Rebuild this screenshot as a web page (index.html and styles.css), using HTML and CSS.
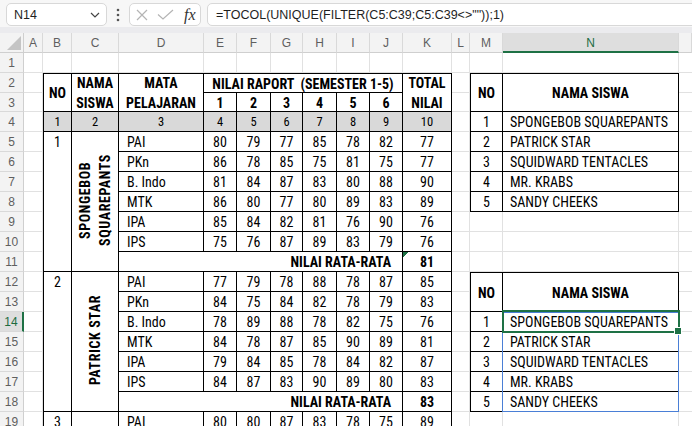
FILE: index.html
```html
<!DOCTYPE html>
<html>
<head>
<meta charset="utf-8">
<link rel="stylesheet" href="styles.css">
</head>
<body>
<div class="app">
  <div class="fbar">
    <div class="namebox">
      <span>N14</span>
      <svg class="chev" width="10" height="6" viewBox="0 0 10 6"><polyline points="1,1 5,5 9,1" fill="none" stroke="#444" stroke-width="1.2"/></svg>
    </div>
    <div class="dots">
      <svg width="4" height="14" viewBox="0 0 4 14"><circle cx="2" cy="2" r="1.3" fill="#555"/><circle cx="2" cy="7" r="1.3" fill="#555"/><circle cx="2" cy="12" r="1.3" fill="#555"/></svg>
    </div>
    <div class="fnbox">
      <svg width="12" height="12" viewBox="0 0 12 12"><path d="M1 1L11 11M11 1L1 11" stroke="#b4b4b4" stroke-width="1.2" fill="none"/></svg>
      <svg width="17" height="11" viewBox="0 0 17 11"><polyline points="1,5.5 6,10 16,1" fill="none" stroke="#b4b4b4" stroke-width="1.2"/></svg>
      <span class="fx">fx</span>
    </div>
    <div class="formula">=TOCOL(UNIQUE(FILTER(C5:C39;C5:C39&lt;&gt;""));1)</div>
  </div>
  <div class="band"></div>
  <div class="sheet">
    <div class="corner">
      <svg width="14" height="14" viewBox="0 0 14 14"><polygon points="14,0 14,14 0,14" fill="#c4c4c4"/></svg>
    </div>
    <div class="colhdr">
      <div class="ch">A</div><div class="ch">B</div><div class="ch">C</div><div class="ch">D</div>
      <div class="ch">E</div><div class="ch">F</div><div class="ch">G</div><div class="ch">H</div>
      <div class="ch">I</div><div class="ch">J</div><div class="ch">K</div><div class="ch">L</div>
      <div class="ch">M</div><div class="ch on">N</div><div class="ch"></div>
    </div>
    <div class="rowhdr">
      <div class="rh">1</div><div class="rh">2</div><div class="rh">3</div><div class="rh">4</div>
      <div class="rh">5</div><div class="rh">6</div><div class="rh">7</div><div class="rh">8</div>
      <div class="rh">9</div><div class="rh">10</div><div class="rh">11</div><div class="rh">12</div>
      <div class="rh">13</div><div class="rh on">14</div><div class="rh">15</div><div class="rh">16</div>
      <div class="rh">17</div><div class="rh">18</div><div class="rh">19</div>
    </div>
    <div class="cells">
      <div class="tbl main">
        <div class="c b rs2">NO</div>
        <div class="c b rs2">NAMA<br>SISWA</div>
        <div class="c b rs2">MATA<br>PELAJARAN</div>
        <div class="c b cs6 pre">NILAI RAPORT  (SEMESTER 1-5)</div>
        <div class="c b rs2">TOTAL<br>NILAI</div>
        <div class="c b">1</div><div class="c b">2</div><div class="c b">3</div><div class="c b">4</div><div class="c b">5</div><div class="c b">6</div>

        <div class="c g">1</div><div class="c g">2</div><div class="c g">3</div><div class="c g">4</div><div class="c g">5</div>
        <div class="c g">6</div><div class="c g">7</div><div class="c g">8</div><div class="c g">9</div><div class="c g">10</div>

        <div class="c rs7 top">1</div>
        <div class="c rs7 vcell"><span class="rot">SPONGEBOB<br>SQUAREPANTS</span></div>
        <div class="c l">PAI</div><div class="c">80</div><div class="c">79</div><div class="c">77</div><div class="c">85</div><div class="c">78</div><div class="c">82</div><div class="c">77</div>
        <div class="c l">PKn</div><div class="c">86</div><div class="c">78</div><div class="c">85</div><div class="c">75</div><div class="c">81</div><div class="c">75</div><div class="c">77</div>
        <div class="c l">B. Indo</div><div class="c">81</div><div class="c">84</div><div class="c">87</div><div class="c">83</div><div class="c">80</div><div class="c">88</div><div class="c">90</div>
        <div class="c l">MTK</div><div class="c">86</div><div class="c">80</div><div class="c">77</div><div class="c">80</div><div class="c">89</div><div class="c">83</div><div class="c">89</div>
        <div class="c l">IPA</div><div class="c">85</div><div class="c">84</div><div class="c">82</div><div class="c">81</div><div class="c">76</div><div class="c">90</div><div class="c">76</div>
        <div class="c l">IPS</div><div class="c">75</div><div class="c">76</div><div class="c">87</div><div class="c">89</div><div class="c">83</div><div class="c">79</div><div class="c">76</div>
        <div class="c b r cs7">NILAI RATA-RATA</div><div class="c b tri">81</div>

        <div class="c rs7 top">2</div>
        <div class="c rs7 vcell"><span class="rot">PATRICK STAR</span></div>
        <div class="c l">PAI</div><div class="c">77</div><div class="c">79</div><div class="c">78</div><div class="c">88</div><div class="c">78</div><div class="c">87</div><div class="c">85</div>
        <div class="c l">PKn</div><div class="c">84</div><div class="c">75</div><div class="c">84</div><div class="c">82</div><div class="c">78</div><div class="c">79</div><div class="c">83</div>
        <div class="c l">B. Indo</div><div class="c">78</div><div class="c">89</div><div class="c">88</div><div class="c">78</div><div class="c">82</div><div class="c">75</div><div class="c">76</div>
        <div class="c l">MTK</div><div class="c">84</div><div class="c">78</div><div class="c">87</div><div class="c">85</div><div class="c">90</div><div class="c">89</div><div class="c">81</div>
        <div class="c l">IPA</div><div class="c">79</div><div class="c">84</div><div class="c">85</div><div class="c">78</div><div class="c">84</div><div class="c">82</div><div class="c">87</div>
        <div class="c l">IPS</div><div class="c">84</div><div class="c">87</div><div class="c">83</div><div class="c">90</div><div class="c">89</div><div class="c">80</div><div class="c">83</div>
        <div class="c b r cs7">NILAI RATA-RATA</div><div class="c b">83</div>

        <div class="c top">3</div>
        <div class="c"></div>
        <div class="c l">PAI</div><div class="c">80</div><div class="c">80</div><div class="c">87</div><div class="c">83</div><div class="c">78</div><div class="c">75</div><div class="c">89</div>
      </div>

      <div class="tbl side s1">
        <div class="c b rs2">NO</div><div class="c b rs2">NAMA SISWA</div>
        <div class="c">1</div><div class="c n">SPONGEBOB SQUAREPANTS</div>
        <div class="c">2</div><div class="c n">PATRICK STAR</div>
        <div class="c">3</div><div class="c n">SQUIDWARD TENTACLES</div>
        <div class="c">4</div><div class="c n">MR. KRABS</div>
        <div class="c">5</div><div class="c n">SANDY CHEEKS</div>
      </div>

      <div class="tbl side s2">
        <div class="c b rs2">NO</div><div class="c b rs2">NAMA SISWA</div>
        <div class="c">1</div><div class="c n">SPONGEBOB SQUAREPANTS</div>
        <div class="c">2</div><div class="c n">PATRICK STAR</div>
        <div class="c">3</div><div class="c n">SQUIDWARD TENTACLES</div>
        <div class="c">4</div><div class="c n">MR. KRABS</div>
        <div class="c">5</div><div class="c n">SANDY CHEEKS</div>
      </div>

      <div class="spill"></div>
      <div class="sel"></div>
    </div>
  </div>
</div>
</body>
</html>
```

FILE: styles.css
```css
:root {
  --cols: 19px 29px 47px 85px 33px 34px 32px 34px 33px 33px 49px 18px 33px 176px 1fr;
  --rows: 20px 20px 19px 20px repeat(15, 20px);
  --grid: #e1e1e1;
  --hdr: #f3f3f3;
  --hdrline: #d9d9d9;
  --green: #1e7145;
}

* { box-sizing: border-box; }

html, body {
  margin: 0;
  height: 100%;
  overflow: hidden;
  background: #fff;
}

body {
  font-family: "Liberation Sans Narrow", "Arial Narrow", "Roboto Condensed", "DejaVu Sans Condensed", sans-serif;
  font-size: 14px;
  color: #000;
}

.app {
  width: 692px;
  height: 426px;
  display: flex;
  flex-direction: column;
  overflow: hidden;
}

/* formula bar */
.fbar {
  height: 27px;
  flex: none;
  background: #f7f7f7;
  display: flex;
  align-items: flex-start;
  padding: 3px 0 0 6px;
  overflow: hidden;
  font-family: "Liberation Sans", Arial, sans-serif;
  font-size: 12.5px;
  color: #1f1f1f;
}

.namebox {
  flex: none;
  width: 101px;
  height: 23px;
  background: #fff;
  border: 1px solid #d8d8d8;
  border-radius: 5px;
  display: flex;
  align-items: center;
  justify-content: space-between;
  padding: 0 6px 0 7px;
}

.dots {
  flex: none;
  width: 22px;
  height: 23px;
  display: flex;
  align-items: center;
  justify-content: center;
}

.fnbox {
  flex: none;
  width: 72px;
  height: 23px;
  background: #fff;
  border: 1px solid #d8d8d8;
  border-radius: 5px;
  display: flex;
  align-items: center;
  gap: 9px;
  padding-left: 6px;
}

.fx {
  font-family: "Liberation Serif", "DejaVu Serif", serif;
  font-style: italic;
  font-size: 16px;
  color: #333;
  margin-left: 1px;
}

.formula {
  flex: none;
  width: 520px;
  height: 23px;
  margin-left: 6px;
  background: #fff;
  border: 1px solid #d8d8d8;
  border-radius: 5px;
  display: flex;
  align-items: center;
  padding-left: 8px;
  white-space: nowrap;
}

.band {
  height: 6px;
  flex: none;
  background: #ebebee;
}

/* sheet */
.sheet {
  flex: 1;
  display: grid;
  grid-template-columns: 24px 1fr;
  grid-template-rows: 20px 1fr;
  min-height: 0;
  overflow: hidden;
}

.corner {
  background: var(--hdr);
  border-right: 1px solid #cfcfcf;
  border-bottom: 1px solid #cfcfcf;
  display: flex;
  align-items: flex-end;
  justify-content: flex-end;
  padding: 0 2px 2px 0;
}

.colhdr {
  display: grid;
  grid-template-columns: var(--cols);
  background: var(--hdr);
  font-family: "Liberation Sans", Arial, sans-serif;
  font-size: 12px;
  color: #5f5f5f;
}

.ch {
  display: flex;
  align-items: center;
  justify-content: center;
  border-right: 1px solid var(--hdrline);
  border-bottom: 1px solid #cfcfcf;
  padding-top: 1px;
}

.ch.on {
  background: #dedede;
  color: #1c6b3f;
  border-bottom: 2px solid var(--green);
}

.rowhdr {
  display: grid;
  grid-template-rows: var(--rows);
  align-content: start;
  background: var(--hdr);
  font-family: "Liberation Sans", Arial, sans-serif;
  font-size: 12px;
  color: #5f5f5f;
}

.rh {
  display: flex;
  align-items: center;
  justify-content: center;
  border-bottom: 1px solid var(--hdrline);
  border-right: 1px solid #cfcfcf;
  padding-top: 1px;
}

.rh.on {
  background: #dedede;
  color: #1c6b3f;
  border-right: 2px solid var(--green);
}

.cells {
  display: grid;
  grid-template-columns: var(--cols);
  grid-template-rows: var(--rows);
  align-content: start;
  background:
    linear-gradient(var(--grid), var(--grid)) 18px 0 / 1px 100% no-repeat,
    linear-gradient(var(--grid), var(--grid)) 47px 0 / 1px 100% no-repeat,
    linear-gradient(var(--grid), var(--grid)) 94px 0 / 1px 100% no-repeat,
    linear-gradient(var(--grid), var(--grid)) 179px 0 / 1px 100% no-repeat,
    linear-gradient(var(--grid), var(--grid)) 212px 0 / 1px 100% no-repeat,
    linear-gradient(var(--grid), var(--grid)) 246px 0 / 1px 100% no-repeat,
    linear-gradient(var(--grid), var(--grid)) 278px 0 / 1px 100% no-repeat,
    linear-gradient(var(--grid), var(--grid)) 312px 0 / 1px 100% no-repeat,
    linear-gradient(var(--grid), var(--grid)) 345px 0 / 1px 100% no-repeat,
    linear-gradient(var(--grid), var(--grid)) 378px 0 / 1px 100% no-repeat,
    linear-gradient(var(--grid), var(--grid)) 427px 0 / 1px 100% no-repeat,
    linear-gradient(var(--grid), var(--grid)) 445px 0 / 1px 100% no-repeat,
    linear-gradient(var(--grid), var(--grid)) 478px 0 / 1px 100% no-repeat,
    linear-gradient(var(--grid), var(--grid)) 654px 0 / 1px 100% no-repeat,
    linear-gradient(to bottom,
      transparent 0 19px, var(--grid) 19px 20px,
      transparent 20px 39px, var(--grid) 39px 40px,
      transparent 40px 58px, var(--grid) 58px 59px,
      transparent 59px 78px, var(--grid) 78px 79px,
      transparent 79px) 0 0 / 100% 79px no-repeat,
    repeating-linear-gradient(to bottom, transparent 0 19px, var(--grid) 19px 20px) 0 79px / 100% 320px no-repeat,
    #fff;
}

/* tables */
.tbl {
  display: grid;
  grid-template-columns: subgrid;
  grid-template-rows: subgrid;
  border-left: 1px solid #000;
  border-top: 1px solid #000;
  background: #fff;
}

.main { grid-column: 2 / 12; grid-row: 2 / 20; }
.s1 { grid-column: 13 / 15; grid-row: 2 / 9; }
.s2 { grid-column: 13 / 15; grid-row: 12 / 19; }

.c {
  display: flex;
  align-items: center;
  justify-content: center;
  text-align: center;
  border-right: 1px solid #000;
  border-bottom: 1px solid #000;
  line-height: 20px;
  padding-top: 1px;
  white-space: nowrap;
  overflow: hidden;
  min-width: 0;
  min-height: 0;
}

.b { font-weight: bold; }
.pre { white-space: pre; }
.l { justify-content: flex-start; padding-left: 8px; }
.n { justify-content: flex-start; padding-left: 7px; }
.r { justify-content: flex-end; padding-right: 11px; }
.top { align-items: flex-start; padding-top: 0; }
.g { background: #d9d9d9; font-size: 12.5px; }
.rs2 { grid-row: span 2; }
.rs7 { grid-row: span 7; }
.cs6 { grid-column: span 6; }
.cs7 { grid-column: span 7; }

.tri {
  background: linear-gradient(135deg, var(--green) 0 4px, transparent 4px) 0 0 / 8px 8px no-repeat;
}

.vcell { padding-top: 0; padding-bottom: 3px; }

.rot {
  writing-mode: vertical-rl;
  transform: rotate(180deg);
  font-weight: bold;
  line-height: 20px;
  letter-spacing: 0.6px;
  text-align: center;
}

/* selection overlays */
.spill {
  grid-column: 14;
  grid-row: 14 / 19;
  margin-left: -1px;
  border: 1px solid #4a7fd6;
  z-index: 2;
}

.sel {
  grid-column: 14;
  grid-row: 14;
  margin: -2px -1px -1px -1px;
  border: 2px solid var(--green);
  z-index: 3;
  position: relative;
}

.sel::after {
  content: "";
  position: absolute;
  right: -4px;
  bottom: -4px;
  width: 6px;
  height: 6px;
  background: var(--green);
  border: 1px solid #fff;
}
```
